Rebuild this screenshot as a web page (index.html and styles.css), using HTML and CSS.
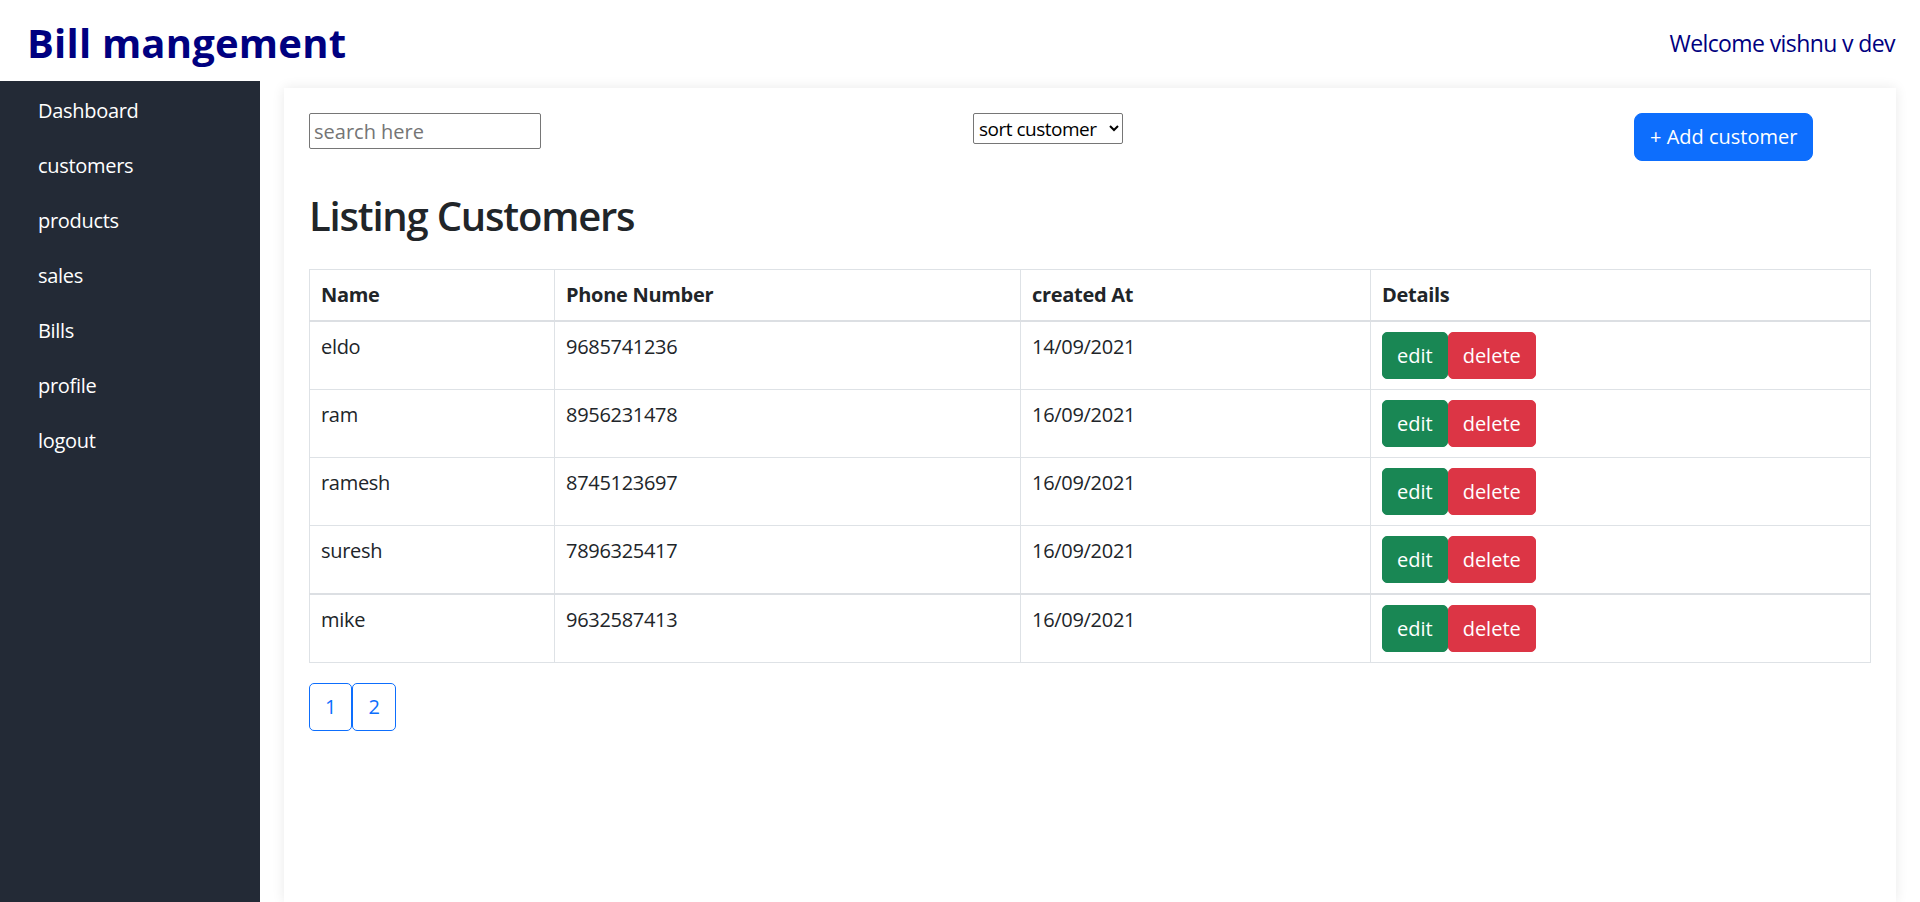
FILE: index.html
```html
<!DOCTYPE html>
<html lang="en">
<head>
<meta charset="utf-8">
<title>Bill mangement</title>
<link rel="stylesheet" href="styles.css">
</head>
<body>
<header class="topbar">
  <h1 class="brand">Bill mangement</h1>
  <div class="welcome">Welcome vishnu v dev</div>
</header>
<div class="layout">
  <nav class="sidebar">
    <a class="nav-link" href="#">Dashboard</a>
    <a class="nav-link" href="#">customers</a>
    <a class="nav-link" href="#">products</a>
    <a class="nav-link" href="#">sales</a>
    <a class="nav-link" href="#">Bills</a>
    <a class="nav-link" href="#">profile</a>
    <a class="nav-link" href="#">logout</a>
  </nav>
  <main class="main">
    <section class="card">
      <div class="toolbar">
        <div class="tool-col"><input class="search" type="text" placeholder="search here"></div>
        <div class="tool-col"><select class="sort"><option>sort customer</option><option>name</option><option>date</option></select></div>
        <div class="tool-col"><button class="btn btn-lg btn-primary">+ Add customer</button></div>
      </div>
      <h2 class="title">Listing Customers</h2>
      <table class="table">
        <colgroup>
          <col class="c-name"><col class="c-phone"><col class="c-date"><col class="c-details">
        </colgroup>
        <thead>
          <tr><th>Name</th><th>Phone Number</th><th>created At</th><th>Details</th></tr>
        </thead>
        <tbody>
          <tr><td>eldo</td><td>9685741236</td><td>14/09/2021</td><td><button class="btn btn-success">edit</button><button class="btn btn-danger">delete</button></td></tr>
          <tr><td>ram</td><td>8956231478</td><td>16/09/2021</td><td><button class="btn btn-success">edit</button><button class="btn btn-danger">delete</button></td></tr>
          <tr><td>ramesh</td><td>8745123697</td><td>16/09/2021</td><td><button class="btn btn-success">edit</button><button class="btn btn-danger">delete</button></td></tr>
          <tr class="thick"><td>suresh</td><td>7896325417</td><td>16/09/2021</td><td><button class="btn btn-success">edit</button><button class="btn btn-danger">delete</button></td></tr>
          <tr><td>mike</td><td>9632587413</td><td>16/09/2021</td><td><button class="btn btn-success">edit</button><button class="btn btn-danger">delete</button></td></tr>
        </tbody>
      </table>
      <div class="pager">
        <button class="btn btn-outline">1</button><button class="btn btn-outline">2</button>
      </div>
    </section>
  </main>
</div>
</body>
</html>
```
FILE: styles.css
```css
* { box-sizing: border-box; }
html, body { margin: 0; padding: 0; }
body {
  font-family: "Open Sans", "Noto Sans", sans-serif;
  font-size: 20px;
  line-height: 30px;
  letter-spacing: -0.015em;
  color: #212529;
  background: #fff;
  height: 902px;
  overflow: hidden;
}

.topbar {
  height: 81px;
  display: flex;
  align-items: center;
  justify-content: space-between;
  padding: 0 25px 0 27px;
}
.brand {
  margin: 0;
  font-size: 40px;
  line-height: 48px;
  font-weight: 700;
  letter-spacing: 0.2px;
  color: #000080;
  padding-top: 4px;
}
.welcome {
  font-size: 23px;
  line-height: 36px;
  letter-spacing: -0.6px;
  color: #000080;
  padding-top: 5px;
}

.layout {
  display: flex;
  height: 821px;
}
.sidebar {
  width: 260px;
  flex: none;
  background: #232a36;
  display: flex;
  flex-direction: column;
}
.nav-link {
  display: block;
  color: #fff;
  text-decoration: none;
  font-size: 20px;
  line-height: 30px;
  padding: 15px 38px 10px;
}

.main {
  flex: 1;
  padding: 7px 24px 0 24px;
}
.card {
  background: #fff;
  height: 100%;
  padding: 25px;
  box-shadow: 0 0 12px rgba(0, 0, 0, 0.09);
}

.toolbar {
  display: grid;
  grid-template-columns: 664px 661px 1fr;
  align-items: start;
}
.search {
  width: 232px;
  height: 36px;
  font: inherit;
  font-size: 20px;
  padding: 1px 4px;
  border: 1px solid #767676;
  border-radius: 2px;
  color: #212529;
}
.search::placeholder { color: #757575; }
.sort {
  width: 150px;
  height: 31px;
  font: inherit;
  font-size: 19px;
  letter-spacing: -0.5px;
  line-height: 26px;
  padding: 0 0 0 1px;
  border: 1px solid #767676;
  border-radius: 2px;
  background: #fff;
  color: #000;
}

.btn {
  font: inherit;
  font-size: 20px;
  line-height: 30px;
  padding: 7.5px 14px;
  border: 1px solid transparent;
  border-radius: 5px;
  color: #fff;
  cursor: pointer;
}
.btn-lg {
  padding: 8px 15px;
  border-radius: 8px;
}
.btn-primary { background: #0d6efd; border-color: #0d6efd; }
.btn-success { background: #198754; border-color: #198754; }
.btn-danger { background: #dc3545; border-color: #dc3545; }
.btn-outline {
  background: #fff;
  color: #0d6efd;
  border-color: #0d6efd;
  padding: 8px 15px;
}

.title {
  margin: 31px 0 29px;
  font-size: 40px;
  line-height: 48px;
  font-weight: 600;
  letter-spacing: -1.2px;
  color: #212529;
}

.table {
  width: 100%;
  border-collapse: collapse;
  border: 1px solid #dee2e6;
}
.c-name { width: 245px; }
.c-phone { width: 466px; }
.c-date { width: 350px; }
.table th, .table td {
  border: 1px solid #dee2e6;
  padding: 10px 11px;
  text-align: left;
  vertical-align: top;
}
.table th { font-weight: 700; }
.table thead tr th { border-bottom: 2px solid #dcdfe3; }
.table tr.thick td { border-bottom: 2px solid #dcdfe3; }

.pager {
  margin-top: 20px;
  display: flex;
}
```
